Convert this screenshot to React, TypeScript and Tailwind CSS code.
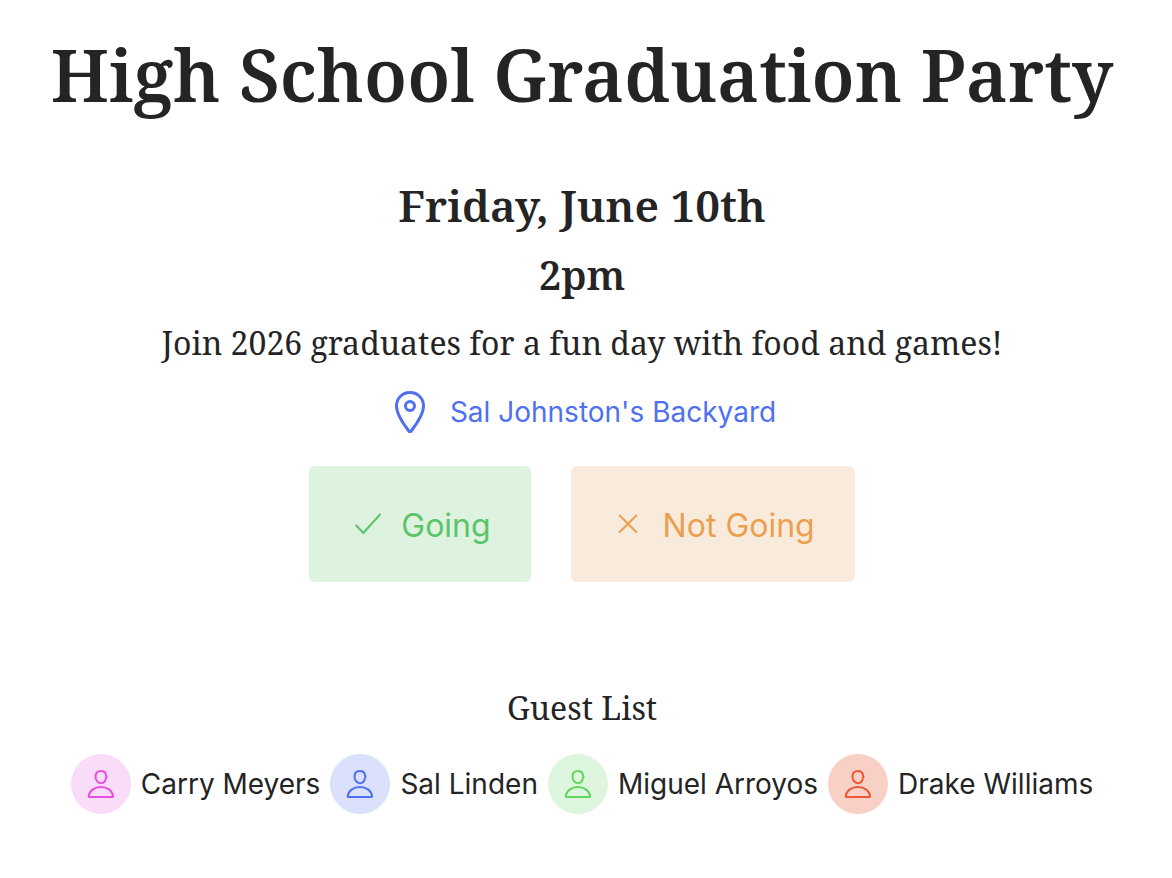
interface Guest {
  name: string;
  avatar: string;
}

const guests: Guest[] = [
  { name: 'Carry Meyers', avatar: 'bg-[#f9dcf8] text-[#e84fdd]' },
  { name: 'Sal Linden', avatar: 'bg-[#dbe1fc] text-[#4f70f0]' },
  { name: 'Miguel Arroyos', avatar: 'bg-[#dff6de] text-[#62d75f]' },
  { name: 'Drake Williams', avatar: 'bg-[#f8d0c5] text-[#ec5a34]' },
];

function PinIcon() {
  return (
    <svg width="42" height="42" viewBox="0 0 42 42" fill="none" stroke="currentColor" strokeWidth="3" aria-hidden="true">
      <path
        d="M22 1.500C14 1.500 8.500 7.600 8.500 15c0 8.400 6.600 17.600 12.300 25a1.500 1.500 0 0 0 2.400 0C28.900 32.600 35.500 23.400 35.500 15 35.500 7.600 30 1.500 22 1.500Z"
        strokeLinejoin="round"
      />
      <circle cx="22" cy="15" r="4.500" />
    </svg>
  );
}

function CheckIcon() {
  return (
    <svg width="40" height="40" viewBox="0 0 40 40" fill="none" stroke="currentColor" strokeWidth="2" strokeLinecap="round" strokeLinejoin="round" aria-hidden="true">
      <path d="M7.300 19.500 14.300 27 31 8.500" />
    </svg>
  );
}

function CrossIcon() {
  return (
    <svg width="40" height="40" viewBox="0 0 40 40" fill="none" stroke="currentColor" strokeWidth="2.100" strokeLinecap="round" aria-hidden="true">
      <path d="m8.700 9.500 16.600 16.600M25.300 9.500 8.700 26.100" />
    </svg>
  );
}

function PersonIcon() {
  return (
    <svg width="60" height="60" viewBox="0 0 60 60" fill="none" stroke="currentColor" strokeWidth="2" strokeLinejoin="round" aria-hidden="true">
      <path d="M29.800 17c3.200 0 5 1.900 5.200 4.500l.6 1.200-.7 1.200c-.4 3-2.200 5.300-5 5.300-3.200 0-5.400-3.100-5.400-6.400 0-3.400 2-5.800 5.300-5.800Z" />
      <path d="M18.300 43c-.5 0-.7-.3-.6-.9.700-5.200 5.500-9.100 12.200-9.100s11.500 3.900 12.200 9.100c.1.600-.1.900-.6.900Z" />
    </svg>
  );
}

export default function App() {
  return (
    <main className="flex flex-col items-center bg-white pt-[26px] pr-2 pb-16 text-center font-['Noto_Serif','Droid_Serif',serif] text-[#242424]">
      <h1 className="text-7xl leading-24 font-semibold">High School Graduation Party</h1>

      <h2 className="mt-[53px] text-[44px] leading-[60px] font-semibold">Friday, June 10th</h2>
      <h3 className="mt-3 text-[40px] leading-14 font-semibold">2pm</h3>
      <p className="mt-[18px] text-[32px] leading-11">Join 2026 graduates for a fun day with food and games!</p>

      <a href="#location" className="mt-[26px] flex items-center gap-5 font-[Inter,sans-serif] text-[28px] leading-10 text-[#4f70f0]">
        <PinIcon />
        Sal Johnston's Backyard
      </a>

      <div className="mt-[33px] flex gap-10 font-[Inter,sans-serif] text-[32px] leading-9">
        <button type="button" className="flex items-center gap-3 rounded-md bg-[#def3df] px-10 pt-10 pb-9 text-[#5cc468]">
          <CheckIcon />
          Going
        </button>
        <button type="button" className="flex items-center gap-3 rounded-md bg-[#f9ebdc] px-10 pt-10 pb-9 text-[#eaa04f]">
          <CrossIcon />
          Not Going
        </button>
      </div>

      <h4 className="mt-[104px] text-[32px] leading-11">Guest List</h4>
      <ul className="mt-6 flex flex-wrap justify-center gap-[10px] font-[Inter,sans-serif] text-[28px] leading-10">
        {guests.map((guest) => (
          <li key={guest.name} className="flex items-center gap-[10px]">
            <span className={`rounded-full ${guest.avatar}`}>
              <PersonIcon />
            </span>
            {guest.name}
          </li>
        ))}
      </ul>
    </main>
  );
}
